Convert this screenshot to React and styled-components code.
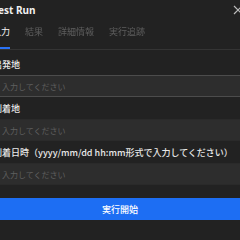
import React from "react";
import styled, { createGlobalStyle } from "styled-components";

const Global = createGlobalStyle`
  html, body { margin: 0; padding: 0; background: #222222; overflow: hidden; }
  body { font-family: "Noto Sans CJK JP", "Noto Sans", sans-serif; }
  * { box-sizing: border-box; }
`;

const Panel = styled.div`
  width: 256px;
  height: 240px;
  margin-left: -8px;
  background: #222222;
  color: #e6e6e6;
  display: flex;
  flex-direction: column;
`;

const Header = styled.div`
  height: 20px;
  display: flex;
  align-items: center;
  justify-content: space-between;
  padding-right: 5px;
`;

const Title = styled.div`
  font-family: "Noto Sans", sans-serif;
  font-size: 10px;
  font-weight: 700;
  color: #f0f0f0;
  margin-left: 1px;
`;

const Close = styled.div`
  width: 10px;
  height: 10px;
  color: #bbbbbb;
  display: flex;
`;

const Tabs = styled.div`
  display: flex;
  gap: 15px;
  border-bottom: 1px solid #343434;
  height: 30px;
`;

const Tab = styled.div`
  font-size: 9px;
  line-height: 12px;
  padding: 6px 0 9px;
  color: ${(p) => (p.$active ? "#f2f2f2" : "#5e5e5e")};
  border-bottom: 2px solid ${(p) => (p.$active ? "#2a72f5" : "transparent")};
  filter: ${(p) => (p.$active ? "none" : "blur(0.3px)")};
`;

const Form = styled.div`
  display: flex;
  flex-direction: column;
  padding-top: 9px;
`;

const Field = styled.div`
  display: flex;
  flex-direction: column;
  gap: 4px;
  margin-bottom: 6px;
`;

const Label = styled.div`
  font-size: 9px;
  line-height: 12px;
  color: #e8e8e8;
  font-weight: 500;
  padding-left: 1px;
`;

const Input = styled.input`
  height: 22px;
  width: 100%;
  background: #2d2d2d;
  border: none;
  border-top: 1px solid ${(p) => (p.$focused ? "#4c4c4c" : "#2a2a2a")};
  border-bottom: 1px solid ${(p) => (p.$focused ? "#4c4c4c" : "#2a2a2a")};
  padding: 0 0 0 10px;
  font-family: inherit;
  font-size: 8px;
  color: #ddd;
  outline: none;
  box-shadow: ${(p) => (p.$focused ? "inset 9px 0 0 -8px #2a72f5" : "none")};
  &::placeholder { color: #5f5f5f; }
`;

const RunButton = styled.button`
  margin-top: 7px;
  height: 22px;
  width: 100%;
  background: #1d6ef3;
  border: none;
  color: #ffffff;
  font-family: inherit;
  font-size: 9px;
  font-weight: 500;
`;

export default function App() {
  return (
    <>
      <Global />
      <Panel>
        <Header>
          <Title>Test Run</Title>
          <Close>
            <svg width="10" height="10" viewBox="0 0 10 10">
              <path d="M1 1L9 9M9 1L1 9" stroke="currentColor" strokeWidth="1.2" />
            </svg>
          </Close>
        </Header>
        <Tabs>
          <Tab $active>入力</Tab>
          <Tab>結果</Tab>
          <Tab>詳細情報</Tab>
          <Tab>実行追跡</Tab>
        </Tabs>
        <Form>
          <Field>
            <Label>出発地</Label>
            <Input $focused placeholder="入力してください" />
          </Field>
          <Field>
            <Label>到着地</Label>
            <Input placeholder="入力してください" />
          </Field>
          <Field>
            <Label>到着日時（yyyy/mm/dd hh:mm形式で入力してください）</Label>
            <Input placeholder="入力してください" />
          </Field>
          <RunButton>実行開始</RunButton>
        </Form>
      </Panel>
    </>
  );
}
